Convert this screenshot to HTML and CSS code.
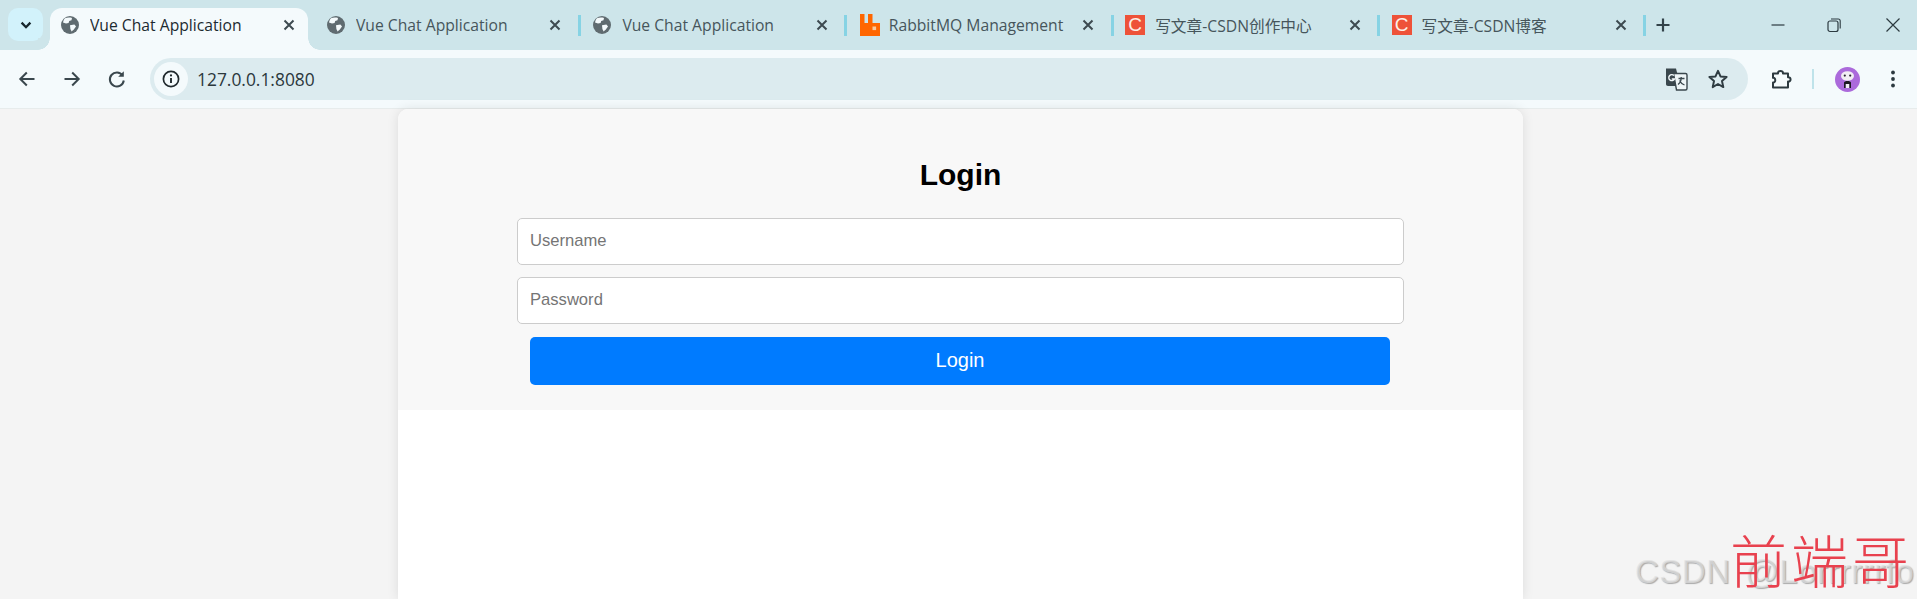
FILE: index.html
```html
<!DOCTYPE html>
<html lang="zh">
<head>
<meta charset="utf-8">
<title>Vue Chat Application</title>
<link rel="stylesheet" href="styles.css">
</head>
<body>
<svg class="defs" aria-hidden="true">
  <defs>
    <symbol id="globe" viewBox="0 0 18 18">
      <circle cx="9" cy="9" r="9" fill="#5f6b70"/>
      <path d="M4 2.2 C6 1.4 9 1.2 11 2 L10.5 4.2 L8.2 5 L7.6 7 L5 7.6 L2 6.4 C2.4 4.8 3 3.2 4 2.2Z" fill="#f4fafc"/>
      <path d="M9 9.2 L13.4 8.6 L15 10.4 L12.8 13.4 L10.6 15.6 L9.4 13 Z" fill="#f4fafc"/>
    </symbol>
    <symbol id="close" viewBox="0 0 14 14">
      <path d="M2.5 2.5 L11.5 11.5 M11.5 2.5 L2.5 11.5" stroke="#3d4a50" stroke-width="2" fill="none"/>
    </symbol>
  </defs>
</svg>
<header class="tabstrip">
  <button class="tab-search" aria-label="Tabs">
    <svg width="14" height="14" viewBox="0 0 14 14"><path d="M2.6 4.6 L7 9.2 L11.4 4.6" stroke="#16262c" stroke-width="2.3" fill="none"/></svg>
  </button>
  <div class="tab tab-active">
    <svg class="fav" width="18" height="18"><use href="#globe"/></svg>
    <span class="tab-title tab-title-dark">Vue Chat Application</span>
    <svg class="tab-close" width="14" height="14"><use href="#close"/></svg>
  </div>
  <div class="tab">
    <svg class="fav" width="18" height="18"><use href="#globe"/></svg>
    <span class="tab-title">Vue Chat Application</span>
    <svg class="tab-close" width="14" height="14"><use href="#close"/></svg>
  </div>
  <div class="tab">
    <svg class="fav" width="18" height="18"><use href="#globe"/></svg>
    <span class="tab-title">Vue Chat Application</span>
    <svg class="tab-close" width="14" height="14"><use href="#close"/></svg>
  </div>
  <div class="tab">
    <svg class="fav fav-rabbit" width="20" height="22" viewBox="0 0 20 22"><path d="M0 0H4.5V9H8V0H12.5V9H20V22H0Z" fill="#ff6600"/><rect x="12.5" y="12.5" width="3.6" height="3.6" fill="#f7c9a0"/></svg>
    <span class="tab-title">RabbitMQ Management</span>
    <svg class="tab-close" width="14" height="14"><use href="#close"/></svg>
  </div>
  <div class="tab">
    <span class="fav fav-csdn">C</span>
    <span class="tab-title">写文章-CSDN创作中心</span>
    <svg class="tab-close" width="14" height="14"><use href="#close"/></svg>
  </div>
  <div class="tab">
    <span class="fav fav-csdn">C</span>
    <span class="tab-title">写文章-CSDN博客</span>
    <svg class="tab-close" width="14" height="14"><use href="#close"/></svg>
  </div>
  <button class="new-tab" aria-label="New tab">
    <svg width="16" height="16" viewBox="0 0 16 16"><path d="M8 1.5V14.5M1.5 8H14.5" stroke="#33434a" stroke-width="2.2" fill="none"/></svg>
  </button>
  <div class="window-controls">
    <svg width="16" height="16" viewBox="0 0 16 16"><path d="M1.5 8H14.5" stroke="#2c3a40" stroke-width="1.2" fill="none"/></svg>
    <svg width="16" height="16" viewBox="0 0 16 16"><rect x="2" y="4" width="10" height="10.5" rx="2" stroke="#2c3a40" stroke-width="1.2" fill="none"/><path d="M5 2H12.2C13.4 2 14.2 2.8 14.2 4V11.5" stroke="#2c3a40" stroke-width="1.1" fill="none"/></svg>
    <svg class="win-close" width="16" height="16" viewBox="0 0 16 16"><path d="M1.5 1.5L14.5 14.5M14.5 1.5L1.5 14.5" stroke="#2c3a40" stroke-width="1.2" fill="none"/></svg>
  </div>
</header>
<nav class="toolbar">
  <div class="nav-buttons">
    <svg width="20" height="20" viewBox="0 0 20 20"><path d="M17.5 10H3.5M9.8 3.5L3.3 10L9.8 16.5" stroke="#3a474d" stroke-width="2" fill="none"/></svg>
    <svg width="20" height="20" viewBox="0 0 20 20"><path d="M2.5 10H16.5M10.2 3.5L16.7 10L10.2 16.5" stroke="#3a474d" stroke-width="2" fill="none"/></svg>
    <svg width="20" height="20" viewBox="0 0 20 20"><path d="M15.6 6.4A7 7 0 1 0 16.8 11.5" stroke="#3a474d" stroke-width="2" fill="none"/><path d="M16.8 2.2V7.8H11.2Z" fill="#3a474d"/></svg>
  </div>
  <div class="omnibox">
    <span class="site-info">
      <svg width="18" height="18" viewBox="0 0 18 18"><circle cx="9" cy="9" r="7.6" stroke="#20292d" stroke-width="1.7" fill="none"/><path d="M9 8V13" stroke="#20292d" stroke-width="1.9"/><circle cx="9" cy="5.4" r="1.1" fill="#20292d"/></svg>
    </span>
    <span class="url">127.0.0.1:8080</span>
    <svg class="translate" width="24" height="24" viewBox="0 0 24 24">
      <path d="M2 1.5H12L16.5 19H4C2.8 19 2 18.2 2 17Z" fill="#3a474d"/>
      <path d="M9.5 6.5H21.5C22.5 6.5 23 7 23 8V21.5C23 22.5 22.5 23 21.5 23H12.5Z" fill="#eef5f7" stroke="#3a474d" stroke-width="1.4"/>
      <path d="M10 8.6A3 3 0 1 0 10.5 12H7.8" stroke="#f4fafc" stroke-width="1.4" fill="none"/>
      <path d="M14.5 11.5H20.5M17.2 10V11.5C17 14 15.6 16.4 14 17.5M15.5 13.5C16.5 15.5 18 17 20.5 18" stroke="#3a474d" stroke-width="1.3" fill="none"/>
    </svg>
    <svg class="star" width="22" height="22" viewBox="0 0 22 22"><path d="M11 2.8L13.5 8.4L19.6 9L15 13.1L16.3 19.1L11 16L5.7 19.1L7 13.1L2.4 9L8.5 8.4Z" stroke="#2f3c42" stroke-width="2" fill="none" stroke-linejoin="round"/></svg>
  </div>
  <div class="toolbar-end">
    <svg class="ext" width="22" height="22" viewBox="0 0 22 22"><path d="M3 5.5H8C7.6 2 13.4 2 13 5.5H18V9.2C21.4 9 21.4 13.8 18 13.6V19.5H3V14.6C6 15 6 9.4 3 9.8Z" stroke="#2c393f" stroke-width="2" fill="none" stroke-linejoin="round"/></svg>
    <span class="toolbar-sep"></span>
    <svg class="avatar" width="25" height="25" viewBox="0 0 25 25">
      <circle cx="12.5" cy="12.5" r="12.5" fill="#ab6adb"/>
      <ellipse cx="12.5" cy="9" rx="6.5" ry="4.8" fill="#f1edf3"/>
      <circle cx="9.8" cy="8.6" r="1.1" fill="#2a2230"/><circle cx="15.2" cy="8.6" r="1.1" fill="#2a2230"/>
      <path d="M9 15.5C9 13.4 16 13.4 16 15.5V21H14.2V17H10.8V21H9Z" fill="#1d1a20"/>
      <rect x="10.8" y="17" width="3.4" height="4" fill="#f1edf3"/>
    </svg>
    <svg class="menu" width="6" height="20" viewBox="0 0 6 20"><circle cx="3" cy="3.5" r="1.9" fill="#2c393f"/><circle cx="3" cy="10" r="1.9" fill="#2c393f"/><circle cx="3" cy="16.5" r="1.9" fill="#2c393f"/></svg>
  </div>
</nav>
<main class="page">
  <section class="card">
    <form class="login-form">
      <h1 class="login-title">Login</h1>
      <input class="login-input" type="text" placeholder="Username">
      <input class="login-input" type="password" placeholder="Password">
      <button class="login-button" type="button">Login</button>
    </form>
  </section>
</main>
<div class="watermark">
  <span class="wm-csdn">CSDN @Lorrrrrrfo</span>
  <span class="wm-cn">前端哥</span>
</div>
</body>
</html>
```
FILE: styles.css
```css
* { box-sizing: border-box; }
html, body { height: 100%; margin: 0; }
body {
  display: flex;
  flex-direction: column;
  overflow: hidden;
  position: relative;
  background: #f4f4f4;
  font-family: "Liberation Sans", Arial, sans-serif;
}
.defs { width: 0; height: 0; position: absolute; }

/* tab strip */
.tabstrip {
  flex: 0 0 50px;
  display: flex;
  align-items: flex-end;
  padding-left: 8px;
  background: #cde5ea;
}
.tab-search {
  flex: 0 0 35px;
  height: 33px;
  align-self: flex-start;
  margin: 8px 3.7px 0 0;
  padding: 0;
  border: 0;
  border-radius: 10px;
  background: #d2f2fb;
  display: flex;
  align-items: center;
  justify-content: center;
}
.tab {
  flex: 0 0 266.4px;
  height: 42px;
  display: flex;
  align-items: center;
  padding: 0 17px 8px 14px;
  font: 15.7px "Open Sans", "Noto Sans CJK SC", sans-serif;
  position: relative;
}
.tab::after {
  content: "";
  position: absolute;
  right: -1.5px;
  top: 7px;
  width: 3px;
  height: 21px;
  background: #86d3e4;
}
.tab-active {
  flex-basis: 258px;
  margin: 0 5px 0 3.3px;
  padding: 0 12px 8px 11px;
  background: #f4fafc;
  border-radius: 12px 12px 0 0;
}
.tab-active::after { display: none; }
.tab-active::before {
  content: "";
  position: absolute;
  left: -12px;
  right: -12px;
  bottom: 0;
  height: 12px;
  z-index: 0;
  background:
    radial-gradient(circle at 0 0, #cde5ea 11.5px, #f4fafc 12px) left bottom / 12px 12px no-repeat,
    radial-gradient(circle at 100% 0, #cde5ea 11.5px, #f4fafc 12px) right bottom / 12px 12px no-repeat;
}
.fav { flex: none; margin-right: 11px; position: relative; }
.fav-rabbit { margin-right: 9px; }
.fav-csdn {
  width: 20px;
  height: 20px;
  margin: 0 10px 0 -1px;
  background: #ee5239;
  color: #fdeee6;
  font: 19px/20px "Liberation Sans", sans-serif;
  text-align: center;
}
.tab-title { flex: 1; color: #46555b; white-space: nowrap; overflow: hidden; }
.tab-title-dark { color: #1c2a30; }
.tab-close { flex: none; position: relative; }
.new-tab {
  flex: 0 0 16px;
  height: 16px;
  align-self: flex-start;
  margin: 17px 0 0 10px;
  padding: 0;
  border: 0;
  background: none;
}
.window-controls {
  align-self: flex-start;
  margin: 17px 16px 0 auto;
  display: flex;
  gap: 40px;
}
.win-close { margin-left: 3px; }

/* toolbar */
.toolbar {
  flex: 0 0 59px;
  display: flex;
  align-items: center;
  padding: 0 21px 0 17px;
  background: #f4fafc;
  border-bottom: 1px solid #e7ecec;
}
.nav-buttons { display: flex; gap: 25px; }
.omnibox {
  flex: 0 0 1598px;
  height: 42px;
  margin: 0 0 0 23px;
  padding: 0 19px 0 4px;
  display: flex;
  align-items: center;
  border-radius: 21px;
  background: #dcebef;
}
.site-info {
  flex: none;
  width: 34px;
  height: 34px;
  border-radius: 50%;
  background: #f4fafc;
  display: flex;
  align-items: center;
  justify-content: center;
}
.url {
  flex: 1;
  margin-left: 9px;
  font: 17.4px "Open Sans", sans-serif;
  color: #2b373c;
}
.translate { margin-right: 19px; }
.toolbar-end { flex: 1; display: flex; align-items: center; padding-left: 21.5px; }
.toolbar-sep { width: 2px; height: 20px; margin: 0 21px 0 20px; background: #bfe3ea; }
.menu { margin-left: auto; }

/* page */
.page {
  flex: 1;
  min-height: 0;
  display: flex;
  justify-content: center;
  padding-left: 4px;
}
.card {
  width: 1125px;
  background: #fff;
  border-radius: 10px 10px 0 0;
  box-shadow: 0 0 12px rgba(0, 0, 0, .1);
  overflow: hidden;
}
.login-form {
  height: 301px;
  display: flex;
  flex-direction: column;
  align-items: center;
  background: #f8f8f8;
}
.login-title {
  margin: 49px 0 26px;
  font-size: 30px;
  line-height: 34px;
  font-weight: 700;
  color: #000;
}
.login-input {
  flex: 0 0 47px;
  width: 887px;
  margin-bottom: 12px;
  padding: 0 12px 1px;
  border: 1px solid #ccc;
  border-radius: 5px;
  background: #fff;
  font: 16.6px "Liberation Sans", sans-serif;
}
.login-input::placeholder { color: #757575; }
.login-button {
  flex: 0 0 48px;
  width: 860px;
  margin: 1px 1px 0 0;
  padding: 0 0 2px;
  border: 0;
  border-radius: 5px;
  background: #007bff;
  color: #fff;
  font: 20px "Liberation Sans", sans-serif;
}

/* image watermark overlay */
.watermark {
  position: absolute;
  right: 0;
  bottom: 0;
  width: 290px;
  height: 70px;
}
.wm-csdn {
  position: absolute;
  left: 8px;
  bottom: 8px;
  font: 33px "Liberation Sans", sans-serif;
  letter-spacing: .5px;
  word-spacing: 5px;
  white-space: nowrap;
  color: rgba(225, 225, 225, .7);
  text-shadow: 1px 1px 1px rgba(110, 110, 110, .55);
}
.wm-cn {
  position: absolute;
  left: 103px;
  bottom: 10px;
  font: 57px/62px "Noto Sans CJK SC", sans-serif;
  font-weight: 300;
  letter-spacing: 4px;
  white-space: nowrap;
  color: #e8414e;
}
```
